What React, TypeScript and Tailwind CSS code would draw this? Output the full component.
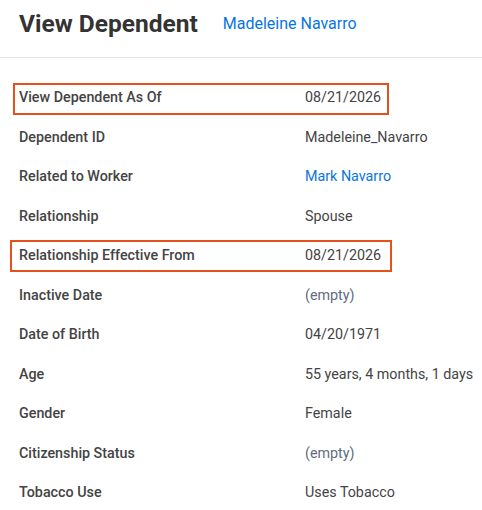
const rows: { label: string; value: string; kind?: "link" | "empty"; box?: "a" | "b" }[] = [
  { label: "View Dependent As Of", value: "08/21/2026", box: "a" },
  { label: "Dependent ID", value: "Madeleine_Navarro" },
  { label: "Related to Worker", value: "Mark Navarro", kind: "link" },
  { label: "Relationship", value: "Spouse" },
  { label: "Relationship Effective From", value: "08/21/2026", box: "b" },
  { label: "Inactive Date", value: "(empty)", kind: "empty" },
  { label: "Date of Birth", value: "04/20/1971" },
  { label: "Age", value: "55 years, 4 months, 1 days" },
  { label: "Gender", value: "Female" },
  { label: "Citizenship Status", value: "(empty)", kind: "empty" },
  { label: "Tobacco Use", value: "Uses Tobacco" },
];

export default function App() {
  return (
    <div className="h-[510px] w-[482px] overflow-hidden bg-white font-['Roboto',sans-serif]">
      <header className="flex h-[58px] items-center gap-[25px] border-b border-[#e3e3e3] pb-[9px] pl-[19px]">
        <h1 className="text-[24.5px] font-bold leading-none text-[#333333]">View Dependent</h1>
        <a className="text-[16px] leading-none text-[#0875e1]">Madeleine Navarro</a>
      </header>

      <div className="pt-[20px]">
        {rows.map((row) => (
          <div key={row.label} className="relative flex h-[39.5px] items-center text-[14.3px]">
            {row.box === "a" ? (
              <div className="absolute left-[13px] top-[5px] h-[32px] w-[376px] border-2 border-[#e5501b]" />
            ) : null}
            {row.box === "b" ? (
              <div className="absolute left-[10px] top-[4px] h-[32px] w-[382px] border-2 border-[#e5501b]" />
            ) : null}
            <span className="w-[305px] shrink-0 pl-[19px] font-medium text-[#444444]">{row.label}</span>
            <span
              className={
                row.kind === "link"
                  ? "whitespace-nowrap text-[#0875e1]"
                  : row.kind === "empty"
                    ? "whitespace-nowrap text-[#5f6b7f]"
                    : "whitespace-nowrap text-[#444444]"
              }
            >
              {row.value}
            </span>
          </div>
        ))}
      </div>
    </div>
  );
}
